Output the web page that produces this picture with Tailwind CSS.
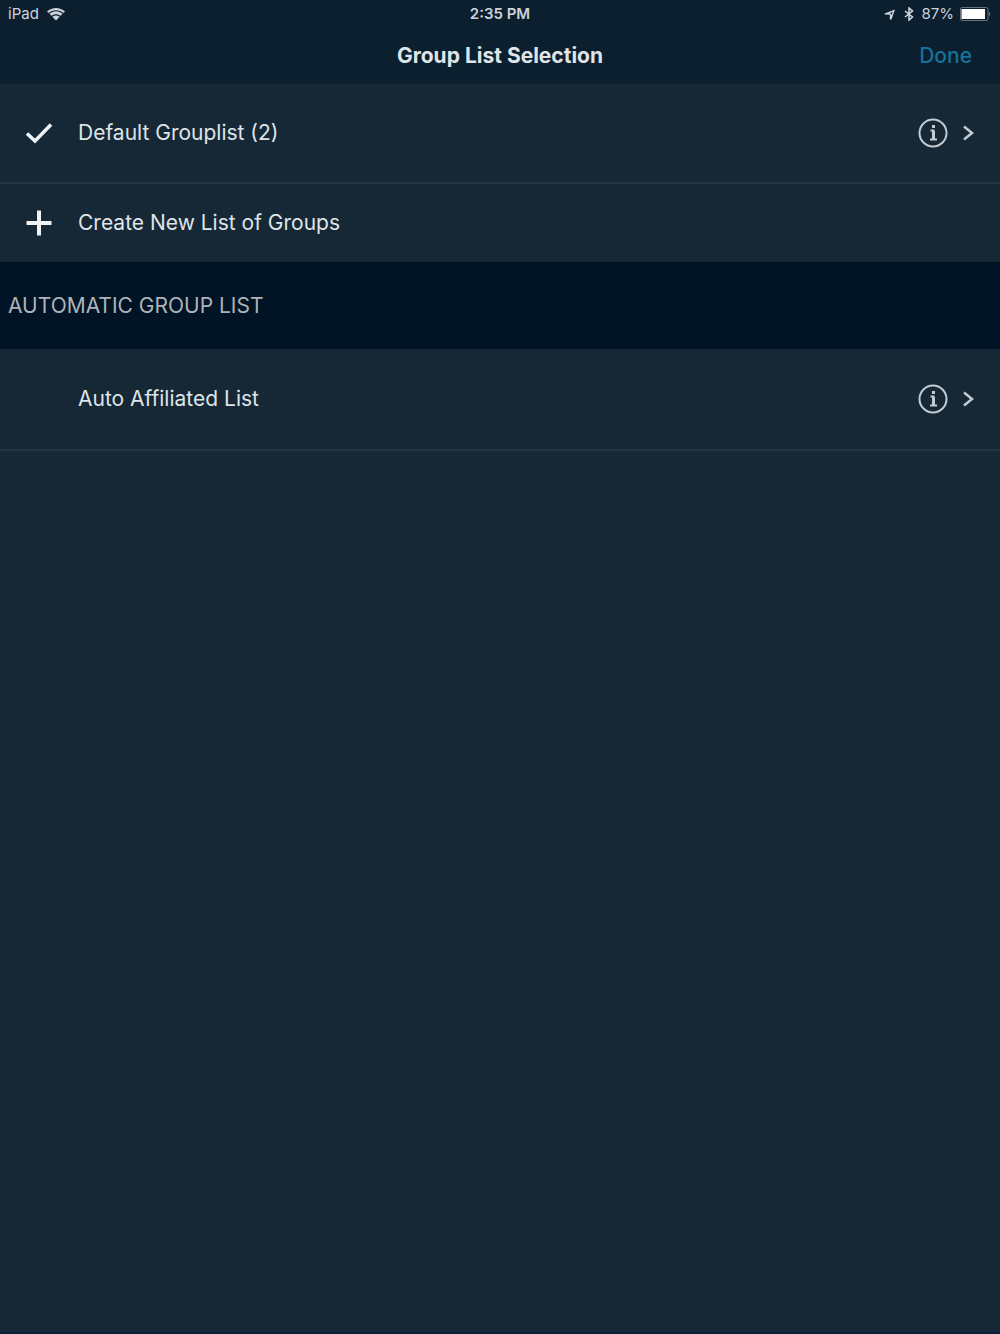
<!DOCTYPE html>
<html lang="en">
<head>
<meta charset="utf-8">
<meta name="viewport" content="width=device-width, initial-scale=1">
<title>Group List Selection</title>
<script src="https://cdn.jsdelivr.net/npm/@tailwindcss/browser@4"></script>
</head>
<body class="flex min-h-screen flex-col border-b-2 border-[#0c1f32] bg-[#162836] font-['Inter',sans-serif] text-[21px] leading-7 text-[#dfe4e8]">
<header class="bg-[#0c1f2f]">
  <div class="grid h-7 grid-cols-3 items-center px-2 text-[15px] leading-4 text-[#ccd3da]">
    <div class="flex items-center gap-2">
      <span>iPad</span>
      <svg class="h-[14px] w-[18px]" viewBox="0 0 18 14" fill="currentColor" aria-hidden="true"><path d="M0 4.500C5-.3 13-.3 18 4.500L16.500 6C12.200 2.300 5.800 2.300 1.500 6Z"/><path d="M2.400 6.800C6.400 3.400 11.600 3.400 15.600 6.800L13.600 8.800C10.800 6.600 7.200 6.600 4.400 8.800Z"/><path d="M5.300 9.700C7.600 8 10.400 8 12.700 9.700L9 13.400Z"/></svg>
    </div>
    <time class="text-center font-semibold">2:35 PM</time>
    <div class="flex items-center justify-end gap-2">
      <svg class="h-3 w-3" viewBox="0 0 12 12" fill="currentColor" aria-hidden="true"><path fill-rule="evenodd" d="M.5 5.500L11 1.500L7.500 11.500H5.800V6.800L.8 6.500ZM5.500 5.500H7L7.300 7.500L8.800 3.800Z"/></svg>
      <svg class="h-[14px] w-[10px]" viewBox="0 0 10 14" fill="none" stroke="currentColor" stroke-width="1.600" aria-hidden="true"><path d="M1 4L8.500 10L5 13V1L8.500 4L1 10"/></svg>
      <span>87%</span>
      <svg class="-ml-0.5 h-[14px] w-[32px]" viewBox="0 0 32 14" aria-hidden="true"><rect x=".5" y=".5" width="27.500" height="13" rx="1.500" fill="none" stroke="#65717c"/><rect x="1.500" y="2" width="23.500" height="10" fill="#fff"/><path d="M29 4.500Q31.500 7 29 9.500Z" fill="#65717c"/></svg>
    </div>
  </div>
  <div class="grid h-14 grid-cols-[1fr_auto_1fr] items-center px-7">
    <h1 class="col-start-2 font-bold">Group List Selection</h1>
    <button type="button" class="justify-self-end font-medium text-[#167298]">Done</button>
  </div>
</header>
<main>
  <ul>
    <li class="flex h-[100px] items-center border-b-2 border-[#203441] pr-[26px]">
      <button type="button" class="flex grow items-center text-left">
        <svg class="mx-[25px] h-7 w-7" viewBox="0 0 28 28" fill="none" stroke="#f0f2f4" stroke-width="3.500" aria-hidden="true"><path d="M2 14.500L10 22L26 5.500"/></svg>
        <span>Default Grouplist (2)</span>
      </button>
      <a href="#default" class="flex items-center gap-[13px]" aria-label="Default Grouplist details">
        <svg class="h-8 w-8" viewBox="0 0 32 32" fill="none" stroke="#c3cbd2" stroke-width="2" aria-hidden="true"><circle cx="16" cy="16" r="13.500"/><path d="M13.500 13.500H16.500V22M13 22.500H20"/><path d="M16.500 14V22M16.500 8V11" stroke-width="3"/></svg>
        <svg class="h-4 w-3" viewBox="0 0 12 16" fill="none" stroke="#c3cbd2" stroke-width="2.500" aria-hidden="true"><path d="M2 1.500L10 8L2 14.500"/></svg>
      </a>
    </li>
    <li class="flex h-[78px] items-center">
      <button type="button" class="flex grow items-center text-left">
        <svg class="mx-[25px] h-7 w-7" viewBox="0 0 28 28" fill="none" stroke="#f0f2f4" stroke-width="4" aria-hidden="true"><path d="M1.500 14H26.500M14 1.500V26.500"/></svg>
        <span>Create New List of Groups</span>
      </button>
    </li>
  </ul>
  <h2 class="flex h-[87px] items-center bg-[#011425] px-2 text-[#adb3ba]">AUTOMATIC GROUP LIST</h2>
  <ul>
    <li class="flex h-[102px] items-center border-b-2 border-[#203441] pr-[26px]">
      <button type="button" class="grow pl-[78px] text-left">Auto Affiliated List</button>
      <a href="#automatic" class="flex items-center gap-[13px]" aria-label="Auto Affiliated List details">
        <svg class="h-8 w-8" viewBox="0 0 32 32" fill="none" stroke="#c3cbd2" stroke-width="2" aria-hidden="true"><circle cx="16" cy="16" r="13.500"/><path d="M13.500 13.500H16.500V22M13 22.500H20"/><path d="M16.500 14V22M16.500 8V11" stroke-width="3"/></svg>
        <svg class="h-4 w-3" viewBox="0 0 12 16" fill="none" stroke="#c3cbd2" stroke-width="2.500" aria-hidden="true"><path d="M2 1.500L10 8L2 14.500"/></svg>
      </a>
    </li>
  </ul>
</main>
</body>
</html>
